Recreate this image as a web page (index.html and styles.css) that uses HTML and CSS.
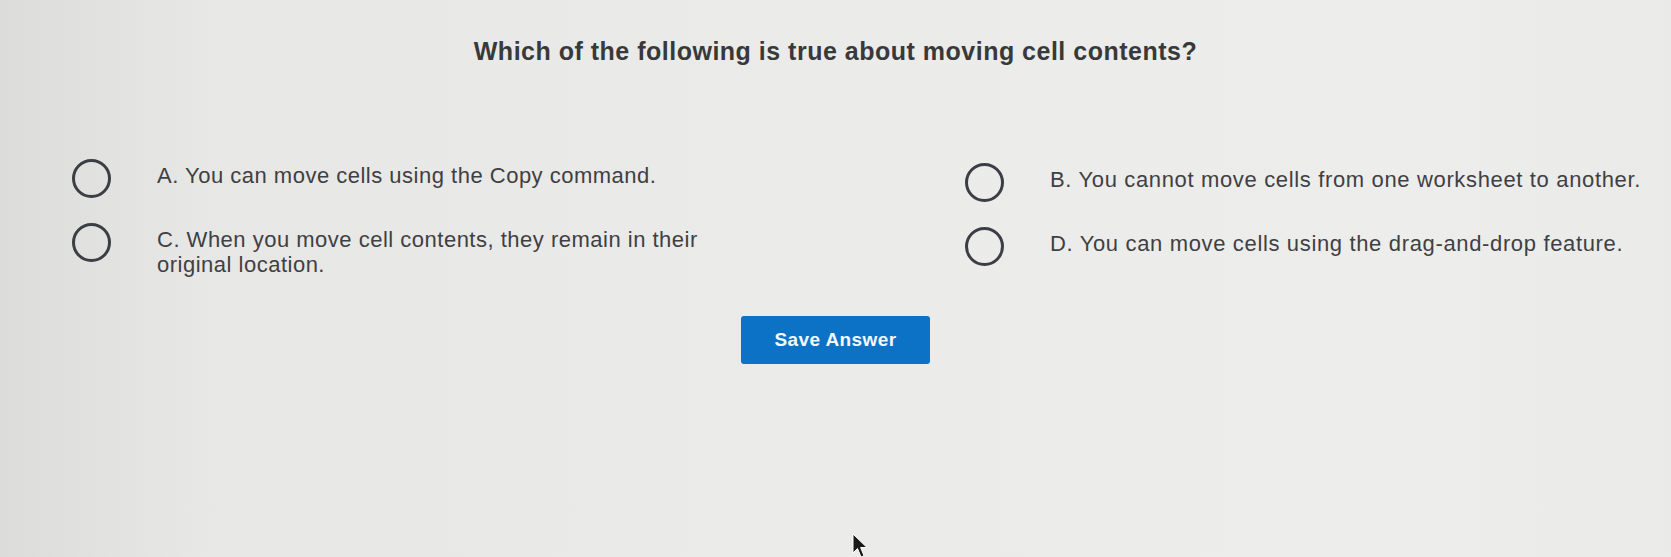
FILE: index.html
```html
<!DOCTYPE html>
<html lang="en">
<head>
<meta charset="utf-8">
<title>Question</title>
<link rel="stylesheet" href="styles.css">
</head>
<body>
<main class="page">
  <h1 class="question">Which of the following is true about moving cell contents?</h1>
  <div class="options">
    <label class="option">
      <span class="radio"></span>
      <span class="option-text">A. You can move cells using the Copy command.</span>
    </label>
    <label class="option option-right">
      <span class="radio"></span>
      <span class="option-text">B. You cannot move cells from one worksheet to another.</span>
    </label>
    <label class="option">
      <span class="radio"></span>
      <span class="option-text">C. When you move cell contents, they remain in their original location.</span>
    </label>
    <label class="option option-right">
      <span class="radio"></span>
      <span class="option-text">D. You can move cells using the drag-and-drop feature.</span>
    </label>
  </div>
  <div class="actions">
    <button class="save-btn" type="button">Save Answer</button>
  </div>
</main>
<svg class="cursor" width="18" height="26" viewBox="0 0 18 26" aria-hidden="true">
  <path d="M1 1 L1 20 L5.5 15.5 L9 24 L12 22.7 L8.6 14.5 L15 14.5 Z" fill="#1a1a1a" stroke="#ffffff" stroke-width="1"/>
</svg>
</body>
</html>
```
FILE: styles.css
```css
html, body {
  margin: 0;
  padding: 0;
}
body {
  width: 1671px;
  height: 557px;
  overflow: hidden;
  position: relative;
  background: linear-gradient(90deg, #dcdddb 0%, #e7e7e5 12%, #ebebe9 50%, #edeeec 85%, #eaeae8 100%);
  font-family: "Liberation Sans", Arial, sans-serif;
  color: #3d3e40;
}
.page {
  padding-top: 36px;
}
.question {
  margin: 0;
  text-align: center;
  font-size: 25px;
  line-height: 30px;
  font-weight: 700;
  letter-spacing: 0.5px;
  color: #38393b;
}
.options {
  margin-top: 93px;
  padding-left: 72px;
  display: grid;
  grid-template-columns: 893px 1fr;
  row-gap: 25px;
}
.option {
  display: flex;
  align-items: flex-start;
  gap: 46px;
}
.option-right {
  position: relative;
  top: 4px;
}
.option-right .option-text {
  letter-spacing: 0.65px;
}
.radio {
  flex: none;
  width: 39px;
  height: 39px;
  box-sizing: border-box;
  border: 3px solid #3b3e44;
  border-radius: 50%;
}
.option-text {
  padding-top: 4px;
  width: 600px;
  font-size: 22px;
  line-height: 25px;
  letter-spacing: 0.5px;
  color: #3f4043;
}
.actions {
  margin-top: 39px;
  display: flex;
  justify-content: center;
}
.save-btn {
  width: 189px;
  height: 48px;
  border: 0;
  border-radius: 3px;
  background: #0c72c6;
  color: #f4f8fc;
  font-family: "Liberation Sans", Arial, sans-serif;
  font-size: 19px;
  font-weight: 700;
  letter-spacing: 0.4px;
  padding: 0;
  margin-left: 0;
}
.cursor {
  position: absolute;
  left: 852px;
  top: 533px;
}
```
